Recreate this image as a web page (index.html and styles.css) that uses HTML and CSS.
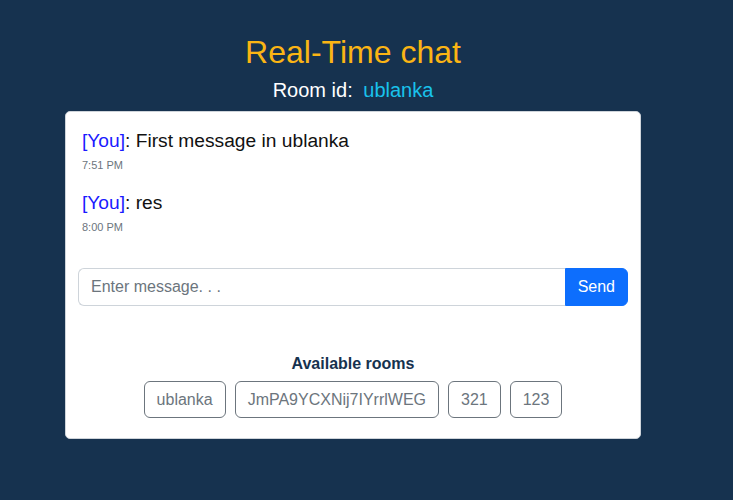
FILE: index.html
```html
<!DOCTYPE html>
<html lang="en">
<head>
<meta charset="utf-8">
<title>Real-Time chat</title>
<link rel="stylesheet" href="styles.css">
</head>
<body>
<div class="page">
  <h1 class="title">Real-Time chat</h1>
  <div class="room-id">Room id: <span class="room-name">ublanka</span></div>
  <div class="card">
    <div class="messages">
      <div class="msg">
        <div class="msg-text"><span class="author">[You]</span>: First message in ublanka</div>
        <div class="msg-time">7:51 PM</div>
      </div>
      <div class="msg">
        <div class="msg-text"><span class="author">[You]</span>: res</div>
        <div class="msg-time">8:00 PM</div>
      </div>
    </div>
    <form class="send-row">
      <input class="msg-input" type="text" placeholder="Enter message. . .">
      <button class="send-btn" type="button">Send</button>
    </form>
    <div class="rooms">
      <div class="rooms-title">Available rooms</div>
      <div class="rooms-list">
        <button class="room-btn" type="button">ublanka</button>
        <button class="room-btn" type="button">JmPA9YCXNij7IYrrlWEG</button>
        <button class="room-btn" type="button">321</button>
        <button class="room-btn" type="button">123</button>
      </div>
    </div>
  </div>
</div>
</body>
</html>
```

FILE: styles.css
```css
* { box-sizing: border-box; }

html, body {
  margin: 0;
  padding: 0;
}

body {
  background: #16324f;
  font-family: "Liberation Sans", Arial, sans-serif;
  color: #000;
  min-height: 500px;
}

.page {
  width: 576px;
  margin-left: 65px;
  padding-top: 33px;
}

.title {
  margin: 0;
  font-size: 32px;
  line-height: 38px;
  font-weight: 400;
  color: #fbb514;
  text-align: center;
}

.room-id {
  margin-top: 7px;
  font-size: 20px;
  line-height: 24px;
  color: #ffffff;
  text-align: center;
}

.room-name {
  margin-left: 5px;
  color: #19c2ec;
}

.card {
  margin-top: 9px;
  background: #ffffff;
  border: 1px solid #ced4da;
  border-radius: 5px;
  padding: 12px 12px 20px;
}

.messages {
  display: flex;
  flex-direction: column;
  gap: 18px;
  padding: 5px 4px 0;
}

.msg-text {
  font-size: 19.2px;
  line-height: 24px;
  color: #111;
}

.author {
  color: #1a1aff;
}

.msg-time {
  margin-top: 4px;
  font-size: 11px;
  line-height: 16px;
  color: #6c757d;
}

.send-row {
  display: flex;
  margin: 33px 0 0;
}

.msg-input {
  flex: 1;
  height: 38px;
  border: 1px solid #ced4da;
  border-right: none;
  border-radius: 6px 0 0 6px;
  padding: 6px 12px;
  font-family: inherit;
  font-size: 16px;
  color: #212529;
  outline: none;
}

.msg-input::placeholder {
  color: #6c757d;
}

.send-btn {
  height: 38px;
  border: 1px solid #0d6efd;
  background: #0d6efd;
  color: #fff;
  border-radius: 0 6px 6px 0;
  padding: 6px 12px;
  font-family: inherit;
  font-size: 16px;
}

.rooms {
  margin-top: 46px;
  text-align: center;
}

.rooms-title {
  font-size: 16px;
  line-height: 24px;
  font-weight: 700;
  color: #16324f;
}

.rooms-list {
  margin-top: 5px;
  display: flex;
  justify-content: center;
  gap: 9px;
}

.room-btn {
  height: 37px;
  border: 1px solid #6c757d;
  background: #fff;
  color: #6c757d;
  border-radius: 6px;
  padding: 0 12px;
  font-family: inherit;
  font-size: 16px;
  line-height: 24px;
}
```
